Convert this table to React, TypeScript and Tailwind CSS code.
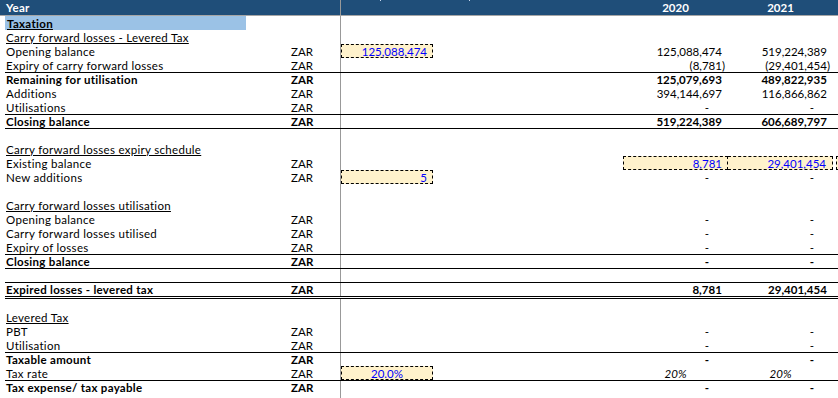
import React from "react";

type Row = {
  label?: string;
  unit?: boolean;
  bold?: boolean;
  underline?: boolean;
  taxation?: boolean;
  top?: boolean;
  double?: boolean;
  input?: string;
  inputCenter?: boolean;
  a?: string;
  b?: string;
  center?: boolean;
  yearInputs?: [string, string];
};

const rows: Row[] = [
  { label: "Taxation", taxation: true },
  { label: "Carry forward losses - Levered Tax", underline: true },
  { label: "Opening balance", unit: true, input: "125,088,474", a: "125,088,474", b: "519,224,389" },
  { label: "Expiry of carry forward losses", unit: true, a: "(8,781)", b: "(29,401,454)" },
  { label: "Remaining for utilisation", unit: true, bold: true, top: true, a: "125,079,693", b: "489,822,935" },
  { label: "Additions", unit: true, a: "394,144,697", b: "116,866,862" },
  { label: "Utilisations", unit: true, a: "-", b: "-" },
  { label: "Closing balance", unit: true, bold: true, top: true, a: "519,224,389", b: "606,689,797" },
  { top: true },
  { label: "Carry forward losses expiry schedule", underline: true },
  { label: "Existing balance", unit: true, yearInputs: ["8,781", "29,401,454"] },
  { label: "New additions", unit: true, input: "5", a: "-", b: "-" },
  {},
  { label: "Carry forward losses utilisation", underline: true },
  { label: "Opening balance", unit: true, a: "-", b: "-" },
  { label: "Carry forward losses utilised", unit: true, a: "-", b: "-" },
  { label: "Expiry of losses", unit: true, a: "-", b: "-" },
  { label: "Closing balance", unit: true, bold: true, top: true, a: "-", b: "-" },
  { top: true },
  { label: "Expired losses - levered tax", unit: true, bold: true, top: true, a: "8,781", b: "29,401,454" },
  { double: true },
  { label: "Levered Tax", underline: true },
  { label: "PBT", unit: true, a: "-", b: "-" },
  { label: "Utilisation", unit: true, a: "-", b: "-" },
  { label: "Taxable amount", unit: true, bold: true, top: true, a: "-", b: "-" },
  { label: "Tax rate", unit: true, input: "20.0%", inputCenter: true, a: "20%", b: "20%", center: true },
  { label: "Tax expense/ tax payable", unit: true, bold: true, top: true, a: "-", b: "-" },
  {},
];

function Num({ v, center }: { v?: string; center?: boolean }) {
  if (!v) return null;
  if (center) return <div className="w-full text-center italic">{v}</div>;
  if (v === "-") return <div className="w-full text-right pr-[19px]">-</div>;
  const neg = v.startsWith("(");
  return (
    <div className="w-full text-right pr-[3px] whitespace-nowrap">
      {v}
      {!neg && <span className="invisible">)</span>}
    </div>
  );
}

function DataRow({ r }: { r: Row }) {
  const border = r.double
    ? "border-t-[3px] border-double border-black"
    : r.top
    ? "border-t border-black"
    : "";
  return (
    <div className="flex h-[14px]">
      <div className="w-[5px] shrink-0" />
      <div className={`flex flex-1 h-full items-center ${border} ${r.bold ? "font-bold" : ""}`}>
        <div className="w-[281px] shrink-0 h-full flex items-center">
          {r.taxation ? (
            <div className="w-[241px] h-full bg-[#9BC2E6] flex items-center pl-[2px] pt-px font-bold underline underline-offset-1 tracking-[0.3px]">
              {r.label}
            </div>
          ) : (
            <span
              className={`pl-[1px] pt-px whitespace-nowrap tracking-[0.3px] ${
                r.underline ? "underline underline-offset-1" : ""
              }`}
            >
              {r.label}
            </span>
          )}
        </div>
        <div className="w-[54px] shrink-0 pl-[5px] pt-px">{r.unit ? "ZAR" : ""}</div>
        <div className="w-[93px] shrink-0 h-full border-l border-[#999999] flex items-center">
          {r.input && (
            <div
              className={`w-full h-full bg-[#FFF2CC] border border-dashed border-black text-[#0000FF] flex items-center pt-px ${
                r.inputCenter ? "justify-center" : "justify-end pr-[5px]"
              }`}
            >
              {r.input}
            </div>
          )}
        </div>
        <div className="w-[190px] shrink-0" />
        {r.yearInputs ? (
          <>
            <div className="w-[105px] shrink-0 h-full bg-[#FFF2CC] border border-dashed border-black text-[#0000FF] flex items-center justify-end pr-[5px] pt-px">
              {r.yearInputs[0]}
            </div>
            <div className="w-[105px] shrink-0 h-full bg-[#FFF2CC] border border-l-0 border-dashed border-black text-[#0000FF] flex items-center justify-end pr-[6px] pt-px">
              {r.yearInputs[1]}
            </div>
            <div className="w-[3px] shrink-0" />
            <div className="flex-1 h-full bg-[#FFF2CC] border border-r-0 border-dashed border-black" />
          </>
        ) : (
          <>
            <div className="w-[105px] shrink-0 flex items-center pt-px">
              <Num v={r.a} center={r.center} />
            </div>
            <div className="w-[105px] shrink-0 flex items-center pt-px">
              <Num v={r.b} center={r.center} />
            </div>
            <div className="flex-1" />
          </>
        )}
      </div>
    </div>
  );
}

export default function App() {
  return (
    <div
      className="w-[838px] h-[398px] overflow-hidden bg-white text-black text-[11.5px] leading-none"
      style={{ fontFamily: "Lato, 'Liberation Sans', sans-serif" }}
    >
      <div className="relative flex h-[16px] bg-[#1F4E79] border-b border-[#a6a6a6] text-white font-bold items-center">
        <div className="w-[340px] shrink-0 pl-[6px] pt-px tracking-[0.3px]">Year</div>
        <div className="w-[93px] shrink-0 h-full border-l border-[#999999]" />
        <div className="w-[190px] shrink-0" />
        <div className="w-[105px] shrink-0 text-center pt-px">2020</div>
        <div className="w-[105px] shrink-0 text-center pt-px">2021</div>
        <div className="flex-1" />
        <div className="absolute left-[380px] top-0 w-px h-px bg-[#c8d8f0]" />
        <div className="absolute left-[469px] top-0 w-px h-px bg-[#c8d8f0]" />
      </div>
      {rows.map((r, i) => (
        <DataRow key={i} r={r} />
      ))}
    </div>
  );
}
